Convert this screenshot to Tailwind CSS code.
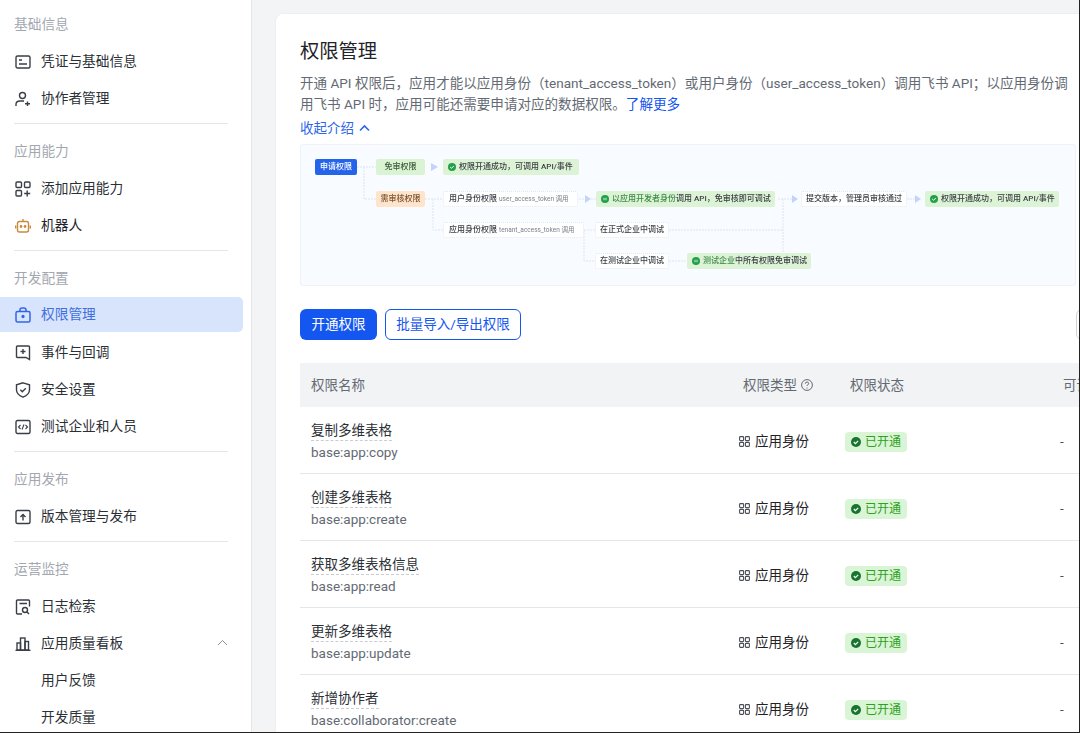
<!DOCTYPE html>
<html lang="zh-CN">
<head>
<meta charset="utf-8">
<script src="https://cdn.jsdelivr.net/npm/@tailwindcss/browser@4"></script>
</head>
<body class="m-0 bg-white">
<div class="flex w-[1080px] h-[733px] overflow-hidden border-r border-b border-[#222] bg-[#f3f4f6] font-['Roboto','Noto_Sans_CJK_SC',sans-serif] text-[13.5px] text-[#2b2f36]">
  <!-- sidebar -->
  <aside class="w-[252px] shrink-0 h-full bg-white border-r border-[#e4e6e9] pt-[6px] overflow-hidden text-[13.7px]">
    <div class="h-[37px] flex items-center pl-[14px] text-[#a3a8b0]">基础信息</div>
    <div class="h-[37px] flex items-center pl-[15px] gap-[10px]">
      <svg class="w-[16px] h-[16px]" viewBox="0 0 16 16" fill="none" stroke="#3a3f47" stroke-width="1.4"><rect x="1" y="2" width="14" height="12" rx="1.5"/><path d="M4 6h3M4 10h8"/></svg><span>凭证与基础信息</span></div>
    <div class="h-[37px] flex items-center pl-[15px] gap-[10px]">
      <svg class="w-[16px] h-[16px]" viewBox="0 0 16 16" fill="none" stroke="#3a3f47" stroke-width="1.4"><circle cx="7.5" cy="4.5" r="3"/><path d="M1 15v-1.500q0-3.500 4-3.500h4M12.500 10.500v4.500M10 12.800h5"/></svg><span>协作者管理</span></div>
    <div class="mt-[6px] mb-[9px] ml-[14px] w-[214px] h-px bg-[#e4e6e9]"></div>
    <div class="h-[37px] flex items-center pl-[14px] text-[#a3a8b0]">应用能力</div>
    <div class="h-[37px] flex items-center pl-[15px] gap-[10px]">
      <svg class="w-[16px] h-[16px]" viewBox="0 0 16 16" fill="none" stroke="#3a3f47" stroke-width="1.4"><rect x="1" y="1" width="5.500" height="5.500" rx="1"/><rect x="9.500" y="1" width="5.500" height="5.500" rx="1"/><rect x="1" y="9.500" width="5.500" height="5.500" rx="1"/><path d="M12.200 9.500v6M9.200 12.500h6"/></svg><span>添加应用能力</span></div>
    <div class="h-[37px] flex items-center pl-[15px] gap-[10px]">
      <svg class="w-[16px] h-[16px]" viewBox="0 0 16 16" fill="none" stroke="#c98a3c" stroke-width="1.400"><rect x="2.500" y="3.500" width="11" height="10.500" rx="2"/><path d="M8 1v2.500M0.700 7.500v3M15.300 7.500v3"/><circle cx="6" cy="8.500" r=".7" fill="#c98a3c"/><circle cx="10" cy="8.500" r=".7" fill="#c98a3c"/></svg><span class="text-[#1f2329]">机器人</span></div>
    <div class="mt-[6px] mb-[9px] ml-[14px] w-[214px] h-px bg-[#e4e6e9]"></div>
    <div class="h-[37px] flex items-center pl-[14px] text-[#a3a8b0]">开发配置</div>
    <div class="h-[37px] flex items-center pb-[2px]">
      <div class="w-[243px] h-[35px] rounded-r-[5px] bg-[#d8e4fb] flex items-center pl-[15px] gap-[10px] text-[#3f6fe0]">
      <svg class="w-[16px] h-[16px]" viewBox="0 0 16 16" fill="none" stroke="#2f66e8" stroke-width="1.500"><rect x="1" y="4.500" width="14" height="10.500" rx="1.500"/><path d="M5 4.500v-1.500q0-2 2-2h2q2 0 2 2v1.500"/><circle cx="8" cy="9.500" r=".9" fill="#2f66e8"/></svg><span>权限管理</span></div></div>
    <div class="h-[37px] flex items-center pl-[15px] gap-[10px]">
      <svg class="w-[16px] h-[16px]" viewBox="0 0 16 16" fill="none" stroke="#3a3f47" stroke-width="1.400"><path d="M2.500 1h11q1 0 1 1v12.500l-3.500-2h-8.500q-1 0-1-1V2q0-1 1-1z"/><path d="M8 4v5M5.500 6.500h5"/></svg><span>事件与回调</span></div>
    <div class="h-[37px] flex items-center pl-[15px] gap-[10px]">
      <svg class="w-[16px] h-[16px]" viewBox="0 0 16 16" fill="none" stroke="#3a3f47" stroke-width="1.400"><path d="M8 .8l6.500 2v5.200q0 4.500-6.500 7.200q-6.500-2.700-6.500-7.200V2.800z"/><path d="M5.300 7.700l2 2 3.500-3.500"/></svg><span>安全设置</span></div>
    <div class="h-[37px] flex items-center pl-[15px] gap-[10px]">
      <svg class="w-[16px] h-[16px]" viewBox="0 0 16 16" fill="none" stroke="#3a3f47" stroke-width="1.400"><rect x="1" y="1.500" width="14" height="13" rx="1.500"/><path d="M5.500 6l-2 2 2 2M10.500 6l2 2-2 2M9 5.500l-2 5" stroke-width="1.100"/></svg><span>测试企业和人员</span></div>
    <div class="mt-[6px] mb-[9px] ml-[14px] w-[214px] h-px bg-[#e4e6e9]"></div>
    <div class="h-[37px] flex items-center pl-[14px] text-[#a3a8b0]">应用发布</div>
    <div class="h-[37px] flex items-center pl-[15px] gap-[10px]">
      <svg class="w-[16px] h-[16px]" viewBox="0 0 16 16" fill="none" stroke="#3a3f47" stroke-width="1.400"><rect x="1" y="1.500" width="14" height="13" rx="1.500"/><path d="M8 11.500V5.500M5.500 8L8 5.500 10.500 8"/></svg><span>版本管理与发布</span></div>
    <div class="mt-[6px] mb-[9px] ml-[14px] w-[214px] h-px bg-[#e4e6e9]"></div>
    <div class="h-[37px] flex items-center pl-[14px] text-[#a3a8b0]">运营监控</div>
    <div class="h-[37px] flex items-center pl-[15px] gap-[10px]">
      <svg class="w-[16px] h-[16px]" viewBox="0 0 16 16" fill="none" stroke="#3a3f47" stroke-width="1.400"><path d="M7 15H2.500q-1 0-1-1V2q0-1 1-1h11q1 0 1 1v5.500M4.500 4.500h7.500"/><circle cx="10" cy="11" r="2.500"/><path d="M12 13l2 2"/></svg><span>日志检索</span></div>
    <div class="h-[37px] flex items-center pl-[15px] gap-[10px] relative">
      <svg class="w-[16px] h-[16px]" viewBox="0 0 16 16" fill="none" stroke="#3a3f47" stroke-width="1.400"><rect x="2" y="7" width="3.500" height="7"/><rect x="5.500" y="2" width="4.500" height="12"/><rect x="10" y="5.500" width="3.500" height="8.500"/><path d="M.5 14.300h15"/></svg><span>应用质量看板</span>
      <svg class="absolute left-[217px] top-[14px] w-[11px] h-[8px]" viewBox="0 0 11 8" fill="none" stroke="#8a8f97" stroke-width="1"><path d="M1 6l4.500-4.500L10 6"/></svg></div>
    <div class="h-[37px] flex items-center pl-[41px]">用户反馈</div>
    <div class="h-[37px] flex items-center pl-[41px]">开发质量</div>
  </aside>

  <!-- main -->
  <main class="flex-1 min-w-0 pt-[13px] pl-[23px] overflow-hidden">
    <div class="w-[900px] h-[800px] bg-white rounded-tl-[8px] border-l border-t border-[#eceef0] pl-[24px] pt-[23px]">
      <h1 class="text-[19.300px] leading-[30px] font-normal text-[#1f2329]">权限管理</h1>
      <p class="mt-[6px] w-[790px] whitespace-nowrap text-[13.550px] leading-[21px] text-[#646a73]">开通 API 权限后，应用才能以应用身份（tenant_access_token）或用户身份（user_access_token）调用飞书 API；以应用身份调<br>用飞书 API 时，应用可能还需要申请对应的数据权限。<span class="text-[#1456f0]">了解更多</span></p>
      <div class="mt-[1px] h-[24px] flex items-center gap-[5px] text-[#2f66e8]">收起介绍
        <svg class="w-[11px] h-[8px]" viewBox="0 0 11 8" fill="none" stroke="#2f66e8" stroke-width="1.600"><path d="M1 6.500l4.500-4.500L10 6.500"/></svg></div>

      <!-- diagram -->
      <div class="relative mt-[4px] w-[776px] h-[142px] rounded-[4px] bg-[#f8fbff] shadow-[inset_0_0_0_1px_#eff1f3] text-[8px] leading-[16px] text-[#3b3f46] font-medium blur-[0.3px]">
        <svg class="absolute left-0 top-[1px] w-[776px] h-[142px]" viewBox="0 0 776 142" fill="none" stroke="#dbe4f2" stroke-width="1" stroke-dasharray="2 1">
          <path d="M57 22h19M64 22v32h12M125 54h18M133 54v31h10M279 54h17M284 85h11M284 85v31h11M478 54h14M607 54h8M369 116h18M483 54v62M369 85h114"/>
        </svg>
        <svg class="absolute left-0 top-[1px] w-[776px] h-[142px]" viewBox="0 0 776 142" fill="#c3d3fa">
          <path d="M131 18l7 4-7 4zM285 50l6 4-6 4zM492 50l6 4-6 4zM615 50l6 4-6 4z"/>
        </svg>
        <div class="absolute left-[15px] top-[15px] w-[42px] h-[16px] rounded-[2px] bg-[#2563eb] text-white text-center">申请权限</div>
        <div class="absolute left-[76px] top-[15px] w-[49px] h-[16px] rounded-[2px] bg-[#d9f3d3] text-[#3f5b38] text-center">免审权限</div>
        <div class="absolute left-[143px] top-[15px] w-[136px] h-[16px] rounded-[2px] bg-[#ddf3d6] flex items-center pl-[5px] gap-[3px] whitespace-nowrap">
          <svg class="w-[8px] h-[8px]" viewBox="0 0 8 8"><circle cx="4" cy="4" r="4" fill="#22a04a"/><path d="M2.200 4l1.300 1.300 2.300-2.300" fill="none" stroke="#fff"/></svg><span>权限开通成功，可调用 API/事件</span></div>
        <div class="absolute left-[76px] top-[47px] w-[49px] h-[16px] rounded-[2px] bg-[#fde4cb] text-[#7a5330] text-center">需审核权限</div>
        <div class="absolute left-[143px] top-[47px] w-[135px] h-[16px] rounded-[2px] bg-white border border-dotted border-[#e3e7ee] leading-[14px] pl-[5px] whitespace-nowrap">用户身份权限 <span class="text-[6.500px] font-normal text-[#7b8089]">user_access_token 调用</span></div>
        <div class="absolute left-[296px] top-[47px] w-[179px] h-[16px] rounded-[2px] bg-[#ddf3d6] flex items-center pl-[5px] gap-[3px] whitespace-nowrap">
          <svg class="w-[8px] h-[8px]" viewBox="0 0 8 8"><circle cx="4" cy="4" r="4" fill="#22a04a"/><path d="M3 2.800v2.400M5 2.800v2.400" stroke="#fff" stroke-width=".8"/></svg><span><span class="text-[#3f8a4a]">以应用开发者身份</span>调用 API，免审核即可调试</span></div>
        <div class="absolute left-[501px] top-[47px] w-[106px] h-[16px] rounded-[2px] bg-white border border-dotted border-[#e3e7ee] leading-[14px] text-center whitespace-nowrap">提交版本，管理员审核通过</div>
        <div class="absolute left-[625px] top-[47px] w-[134px] h-[16px] rounded-[2px] bg-[#ddf3d6] flex items-center pl-[5px] gap-[3px] whitespace-nowrap">
          <svg class="w-[8px] h-[8px]" viewBox="0 0 8 8"><circle cx="4" cy="4" r="4" fill="#22a04a"/><path d="M2.200 4l1.300 1.300 2.300-2.300" fill="none" stroke="#fff"/></svg><span>权限开通成功，可调用 API/事件</span></div>
        <div class="absolute left-[143px] top-[78px] w-[141px] h-[16px] rounded-[2px] bg-white border border-dotted border-[#e3e7ee] leading-[14px] pl-[5px] whitespace-nowrap">应用身份权限 <span class="text-[6.500px] font-normal text-[#7b8089]">tenant_access_token 调用</span></div>
        <div class="absolute left-[295px] top-[78px] w-[74px] h-[16px] rounded-[2px] bg-white border border-dotted border-[#e3e7ee] leading-[14px] text-center whitespace-nowrap">在正式企业中调试</div>
        <div class="absolute left-[295px] top-[109px] w-[74px] h-[16px] rounded-[2px] bg-white border border-dotted border-[#e3e7ee] leading-[14px] text-center whitespace-nowrap">在测试企业中调试</div>
        <div class="absolute left-[387px] top-[109px] w-[124px] h-[16px] rounded-[2px] bg-[#ddf3d6] flex items-center pl-[5px] gap-[3px] whitespace-nowrap">
          <svg class="w-[8px] h-[8px]" viewBox="0 0 8 8"><circle cx="4" cy="4" r="4" fill="#22a04a"/><path d="M3 2.800v2.400M5 2.800v2.400" stroke="#fff" stroke-width=".8"/></svg><span><span class="text-[#3f8a4a]">测试企业</span>中所有权限免审调试</span></div>
      </div>

      <!-- buttons -->
      <div class="mt-[23px] flex gap-[8px]">
        <button class="h-[31px] w-[77px] rounded-[6px] bg-[#1456f0] text-white">开通权限</button>
        <button class="h-[31px] w-[136px] rounded-[6px] border border-[#1456f0] text-[#1456f0] bg-white">批量导入/导出权限</button>
        <div class="ml-[547px] h-[31px] w-[20px] rounded-[6px] border border-[#d0d3d8] bg-white"></div>
      </div>

      <!-- table -->
      <div class="mt-[23px] w-[790px]">
        <div class="flex h-[44px] items-center bg-[#f2f3f5] text-[#646a73] whitespace-nowrap">
          <div class="w-[443px] shrink-0 pl-[11px]">权限名称</div>
          <div class="w-[107px] shrink-0 flex items-center gap-[4px]">权限类型
            <svg class="w-[12px] h-[12px]" viewBox="0 0 12 12" fill="none" stroke="#646a73"><circle cx="6" cy="6" r="5.400"/><path d="M4.300 4.700q0-1.700 1.700-1.700t1.700 1.600q0 .9-1.100 1.300-.6.300-.6 1.100M6 8.500v1"/></svg></div>
          <div class="w-[213px] shrink-0">权限状态</div>
          <div>可调用</div>
        </div>
        <div class="flex h-[67px] pt-[2px] items-center border-b border-[#e4e6e9]">
          <div class="w-[439px] shrink-0 pl-[11px] flex flex-col gap-[1px]"><div class="w-fit leading-[19px] border-b border-dashed border-[#c9cdd3]">复制多维表格</div><div class="leading-[20px] text-[#646a73]">base:app:copy</div></div>
          <div class="w-[106px] shrink-0 flex items-center gap-[5px] text-[#1f2329]"><svg class="w-[11px] h-[11px]" viewBox="0 0 11 11" fill="none" stroke="#4a4f57" stroke-width="1.100"><rect x=".6" y=".6" width="4" height="4" rx=".8"/><rect x="6.400" y=".6" width="4" height="4" rx=".8"/><rect x=".6" y="6.400" width="4" height="4" rx=".8"/><rect x="6.400" y="6.400" width="4" height="4" rx=".8"/></svg>应用身份</div>
          <div class="w-[215px] shrink-0"><div class="mt-[1px] w-[62px] h-[20px] rounded-[4px] bg-[#d9f5d6] flex items-center pl-[6px] gap-[4px] text-[12px] text-[#2ea121]"><svg class="w-[10px] h-[10px]" viewBox="0 0 10 10"><circle cx="5" cy="5" r="5" fill="#18752e"/><path d="M2.800 5l1.600 1.600 2.800-2.800" fill="none" stroke="#fff" stroke-width="1.200"/></svg>已开通</div></div>
          <div class="text-[#4a4f57]">-</div>
        </div>
        <div class="flex h-[67px] pt-[2px] items-center border-b border-[#e4e6e9]">
          <div class="w-[439px] shrink-0 pl-[11px] flex flex-col gap-[1px]"><div class="w-fit leading-[19px] border-b border-dashed border-[#c9cdd3]">创建多维表格</div><div class="leading-[20px] text-[#646a73]">base:app:create</div></div>
          <div class="w-[106px] shrink-0 flex items-center gap-[5px] text-[#1f2329]"><svg class="w-[11px] h-[11px]" viewBox="0 0 11 11" fill="none" stroke="#4a4f57" stroke-width="1.100"><rect x=".6" y=".6" width="4" height="4" rx=".8"/><rect x="6.400" y=".6" width="4" height="4" rx=".8"/><rect x=".6" y="6.400" width="4" height="4" rx=".8"/><rect x="6.400" y="6.400" width="4" height="4" rx=".8"/></svg>应用身份</div>
          <div class="w-[215px] shrink-0"><div class="mt-[1px] w-[62px] h-[20px] rounded-[4px] bg-[#d9f5d6] flex items-center pl-[6px] gap-[4px] text-[12px] text-[#2ea121]"><svg class="w-[10px] h-[10px]" viewBox="0 0 10 10"><circle cx="5" cy="5" r="5" fill="#18752e"/><path d="M2.800 5l1.600 1.600 2.800-2.800" fill="none" stroke="#fff" stroke-width="1.200"/></svg>已开通</div></div>
          <div class="text-[#4a4f57]">-</div>
        </div>
        <div class="flex h-[67px] pt-[2px] items-center border-b border-[#e4e6e9]">
          <div class="w-[439px] shrink-0 pl-[11px] flex flex-col gap-[1px]"><div class="w-fit leading-[19px] border-b border-dashed border-[#c9cdd3]">获取多维表格信息</div><div class="leading-[20px] text-[#646a73]">base:app:read</div></div>
          <div class="w-[106px] shrink-0 flex items-center gap-[5px] text-[#1f2329]"><svg class="w-[11px] h-[11px]" viewBox="0 0 11 11" fill="none" stroke="#4a4f57" stroke-width="1.100"><rect x=".6" y=".6" width="4" height="4" rx=".8"/><rect x="6.400" y=".6" width="4" height="4" rx=".8"/><rect x=".6" y="6.400" width="4" height="4" rx=".8"/><rect x="6.400" y="6.400" width="4" height="4" rx=".8"/></svg>应用身份</div>
          <div class="w-[215px] shrink-0"><div class="mt-[1px] w-[62px] h-[20px] rounded-[4px] bg-[#d9f5d6] flex items-center pl-[6px] gap-[4px] text-[12px] text-[#2ea121]"><svg class="w-[10px] h-[10px]" viewBox="0 0 10 10"><circle cx="5" cy="5" r="5" fill="#18752e"/><path d="M2.800 5l1.600 1.600 2.800-2.800" fill="none" stroke="#fff" stroke-width="1.200"/></svg>已开通</div></div>
          <div class="text-[#4a4f57]">-</div>
        </div>
        <div class="flex h-[67px] pt-[2px] items-center border-b border-[#e4e6e9]">
          <div class="w-[439px] shrink-0 pl-[11px] flex flex-col gap-[1px]"><div class="w-fit leading-[19px] border-b border-dashed border-[#c9cdd3]">更新多维表格</div><div class="leading-[20px] text-[#646a73]">base:app:update</div></div>
          <div class="w-[106px] shrink-0 flex items-center gap-[5px] text-[#1f2329]"><svg class="w-[11px] h-[11px]" viewBox="0 0 11 11" fill="none" stroke="#4a4f57" stroke-width="1.100"><rect x=".6" y=".6" width="4" height="4" rx=".8"/><rect x="6.400" y=".6" width="4" height="4" rx=".8"/><rect x=".6" y="6.400" width="4" height="4" rx=".8"/><rect x="6.400" y="6.400" width="4" height="4" rx=".8"/></svg>应用身份</div>
          <div class="w-[215px] shrink-0"><div class="mt-[1px] w-[62px] h-[20px] rounded-[4px] bg-[#d9f5d6] flex items-center pl-[6px] gap-[4px] text-[12px] text-[#2ea121]"><svg class="w-[10px] h-[10px]" viewBox="0 0 10 10"><circle cx="5" cy="5" r="5" fill="#18752e"/><path d="M2.800 5l1.600 1.600 2.800-2.800" fill="none" stroke="#fff" stroke-width="1.200"/></svg>已开通</div></div>
          <div class="text-[#4a4f57]">-</div>
        </div>
        <div class="flex h-[67px] pt-[2px] items-center border-b border-[#e4e6e9]">
          <div class="w-[439px] shrink-0 pl-[11px] flex flex-col gap-[1px]"><div class="w-fit leading-[19px] border-b border-dashed border-[#c9cdd3]">新增协作者</div><div class="leading-[20px] text-[#646a73]">base:collaborator:create</div></div>
          <div class="w-[106px] shrink-0 flex items-center gap-[5px] text-[#1f2329]"><svg class="w-[11px] h-[11px]" viewBox="0 0 11 11" fill="none" stroke="#4a4f57" stroke-width="1.100"><rect x=".6" y=".6" width="4" height="4" rx=".8"/><rect x="6.400" y=".6" width="4" height="4" rx=".8"/><rect x=".6" y="6.400" width="4" height="4" rx=".8"/><rect x="6.400" y="6.400" width="4" height="4" rx=".8"/></svg>应用身份</div>
          <div class="w-[215px] shrink-0"><div class="mt-[1px] w-[62px] h-[20px] rounded-[4px] bg-[#d9f5d6] flex items-center pl-[6px] gap-[4px] text-[12px] text-[#2ea121]"><svg class="w-[10px] h-[10px]" viewBox="0 0 10 10"><circle cx="5" cy="5" r="5" fill="#18752e"/><path d="M2.800 5l1.600 1.600 2.800-2.800" fill="none" stroke="#fff" stroke-width="1.200"/></svg>已开通</div></div>
          <div class="text-[#4a4f57]">-</div>
        </div>
      </div>
    </div>
  </main>
</div>
</body>
</html>
